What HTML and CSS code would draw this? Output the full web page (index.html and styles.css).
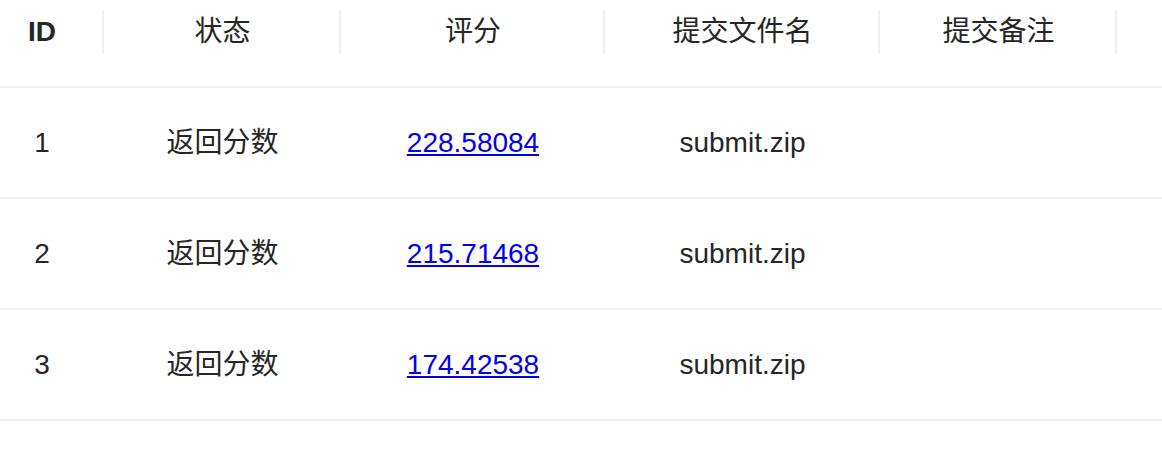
FILE: index.html
```html
<!DOCTYPE html>
<html lang="zh-CN">
<head>
    <meta charset="UTF-8">
    <meta name="viewport" content="width=device-width, initial-scale=1.0">
    <title>提交记录</title>
    <link rel="stylesheet" href="styles.css">
</head>
<body>

<!-- Submissions table -->
<table class="submit-table">
    <colgroup>
        <col class="w-id">
        <col class="w-status">
        <col class="w-score">
        <col class="w-file">
        <col class="w-note">
        <col>
    </colgroup>
    <thead>
        <tr>
            <th class="col-id">ID</th>
            <th>状态</th>
            <th>评分</th>
            <th>提交文件名</th>
            <th>提交备注</th>
            <th class="last"></th>
        </tr>
    </thead>
    <tbody>
        <tr>
            <td class="col-id">1</td>
            <td>返回分数</td>
            <td><a href="#">228.58084</a></td>
            <td>submit.zip</td>
            <td></td>
            <td></td>
        </tr>
        <tr>
            <td class="col-id">2</td>
            <td>返回分数</td>
            <td><a href="#">215.71468</a></td>
            <td>submit.zip</td>
            <td></td>
            <td></td>
        </tr>
        <tr>
            <td class="col-id">3</td>
            <td>返回分数</td>
            <td><a href="#">174.42538</a></td>
            <td>submit.zip</td>
            <td></td>
            <td></td>
        </tr>
    </tbody>
</table>

</body>
</html>
```

FILE: styles.css
```css
/* Base */
* {
    margin: 0;
    padding: 0;
    box-sizing: border-box;
}

body {
    background: #fff;
    font-family: "Liberation Sans", "Noto Sans CJK SC", sans-serif;
    font-size: 28px;
    color: #262626;
}

/* Table */
.submit-table {
    width: 100%;
    table-layout: fixed;
    border-collapse: collapse;
}

.w-id { width: 104px; }
.w-status { width: 237px; }
.w-score { width: 264px; }
.w-file { width: 275px; }
.w-note { width: 237px; }

th, td {
    text-align: center;
    line-height: 44px;
    padding: 32px 16px;
    border-bottom: 2px solid #f0f0f0;
    white-space: nowrap;
}

th {
    position: relative;
    padding-top: 10px;
    font-weight: 400;
}

th::before {
    content: "";
    position: absolute;
    top: 10px;
    right: 0;
    width: 2px;
    height: 44px;
    background: #f0f0f0;
}

th.last::before {
    display: none;
}

td {
    line-height: 45px;
}

.col-id {
    padding-left: 0;
    padding-right: 20px;
}

th.col-id {
    font-weight: 700;
}

td a {
    color: #0000ee;
    text-decoration: underline;
}
```
